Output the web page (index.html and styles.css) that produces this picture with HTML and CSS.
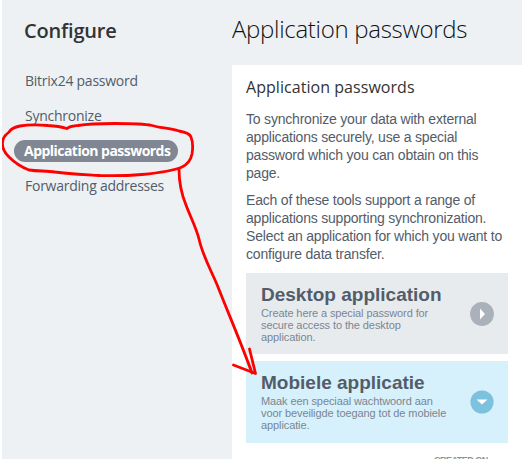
FILE: index.html
```html
<!DOCTYPE html>
<html lang="en">
<head>
<meta charset="utf-8">
<title>Application passwords</title>
<link rel="stylesheet" href="styles.css">
</head>
<body>
<div class="page">
  <aside class="sidebar">
    <h2 class="sidebar-title">Configure</h2>
    <nav class="menu">
      <a class="menu-item">Bitrix24 password</a>
      <a class="menu-item">Synchronize</a>
      <a class="menu-item menu-item-active">Application passwords</a>
      <a class="menu-item">Forwarding addresses</a>
    </nav>
  </aside>
  <main class="main">
    <h1 class="title">Application passwords</h1>
    <section class="panel">
      <h3 class="panel-title">Application passwords</h3>
      <p class="text">To synchronize your data with external<br>applications securely, use a special<br>password which you can obtain on this<br>page.</p>
      <p class="text">Each of these tools support a range of<br>applications supporting synchronization.<br>Select an application for which you want to<br>configure data transfer.</p>
      <div class="app app-desktop">
        <div class="app-info">
          <h4 class="app-title">Desktop application</h4>
          <p class="app-desc">Create here a special password for<br>secure access to the desktop<br>application.</p>
        </div>
        <svg class="toggle" viewBox="0 0 24 24"><circle cx="12" cy="12" r="11.9" fill="#aab1ba"/><path d="M10 6.500v11l5-5.500z" fill="#fff"/></svg>
      </div>
      <div class="app app-mobile">
        <div class="app-info">
          <h4 class="app-title">Mobiele applicatie</h4>
          <p class="app-desc">Maak een speciaal wachtwoord aan<br>voor beveiligde toegang tot de mobiele<br>applicatie.</p>
        </div>
        <svg class="toggle" viewBox="0 0 24 24"><circle cx="12" cy="12" r="11.6" fill="#7cc2de"/><path d="M6.500 9.500h11l-5.500 5z" fill="#fff"/></svg>
      </div>
      <div class="column-head">CREATED ON</div>
    </section>
  </main>
  <svg class="annotation" viewBox="0 0 522 459">
    <path d="M67 128.500C62 127 56 126 48 125.500C38 124.500 28 124.500 20 126C15 127 11 129 9 132C5 135 2.500 138 2.500 143C2 149 5 153 9 157C14 162 21 167 29 170C38 171.500 47 170.500 55 172C70 174 85 174.500 100 175.500C115 176 130 175.500 142 174.500C158 173 174 170.500 182 167C188 164 191 159 192 154C193 148 193 142 191 137C190 134 185 132 179 131C169 128 160 128 152 125.500C145 124 130 123.500 115 123.500C100 123.500 87 124 78 125.500C73 126 70 126 67 128.500"/>
    <path d="M179 169C179 181 181 193 186 205C190 216 196 227 199 239C203 257 212 272 218 287C229 315 242 345 252 373"/>
    <path d="M249.500 349L255.500 373.500L233.500 365"/>
  </svg>
</div>
</body>
</html>
```
FILE: styles.css
```css
* { box-sizing: border-box; }
body { margin: 0; background: #fff; overflow: hidden; }
h1, h2, h3, h4, p { margin: 0; }
.page {
  position: relative;
  display: flex;
  height: 459px;
  margin-left: 2px;
  background: #edf1f4;
  font-family: "Open Sans", sans-serif;
  overflow: hidden;
}
.sidebar { flex: none; width: 230px; padding: 17px 0 0 12px; }
.sidebar-title {
  padding-left: 10px;
  font-size: 20px;
  line-height: 28px;
  font-weight: 600;
  letter-spacing: -0.2px;
  color: #333;
}
.menu { display: flex; flex-direction: column; gap: 13px; margin-top: 25px; align-items: flex-start; }
.menu-item {
  height: 22px;
  padding-left: 11px;
  font-size: 14px;
  line-height: 22px;
  letter-spacing: -0.25px;
  color: #535c69;
  white-space: nowrap;
}
.menu-item-active {
  width: 164px;
  padding-left: 10px;
  border-radius: 11px;
  background: #818693;
  color: #fff;
  font-weight: 700;
  letter-spacing: -0.53px;
}
.main { flex: 1; min-width: 0; padding-top: 9px; }
.title {
  height: 56px;
  font-size: 24px;
  line-height: 40px;
  font-weight: 300;
  letter-spacing: -0.3px;
  color: #111;
  white-space: nowrap;
}
.panel {
  height: 394px;
  padding: 10px 14px 0;
  background: #fff;
  font-family: "Liberation Sans", Arial, sans-serif;
}
.panel-title {
  margin-bottom: 11px;
  font: 400 16px/24px "Open Sans", sans-serif;
  letter-spacing: 0.05px;
  color: #333;
  white-space: nowrap;
}
.text { margin-bottom: 9px; font-size: 14px; line-height: 18px; letter-spacing: -0.2px; color: #535c69; white-space: nowrap; }
.app {
  display: flex;
  align-items: center;
  justify-content: space-between;
  width: 262px;
  padding: 0 14px 0 15px;
}
.app-desktop { height: 81px; margin-top: 10px; background: #e7ebee; }
.app-mobile { height: 82px; margin-top: 7px; background: #d6f0fc; }
.app-info { align-self: flex-start; padding-top: 10px; white-space: nowrap; }
.app-title { font-size: 19px; line-height: 24px; color: #535c69; }
.app-desc { font-size: 11px; line-height: 12px; letter-spacing: -0.1px; color: #7b8691; }
.toggle { flex: none; width: 24px; height: 24px; }
.column-head {
  margin: 11px 0 0 188px;
  font-size: 9px;
  line-height: 12px;
  font-weight: 700;
  letter-spacing: -0.5px;
  color: #8a929b;
  white-space: nowrap;
}
.annotation {
  position: absolute;
  left: -2px;
  top: 0;
  width: 522px;
  height: 459px;
  fill: none;
  stroke: #f00;
  stroke-width: 2.8;
  stroke-linecap: round;
  stroke-linejoin: round;
}
```
